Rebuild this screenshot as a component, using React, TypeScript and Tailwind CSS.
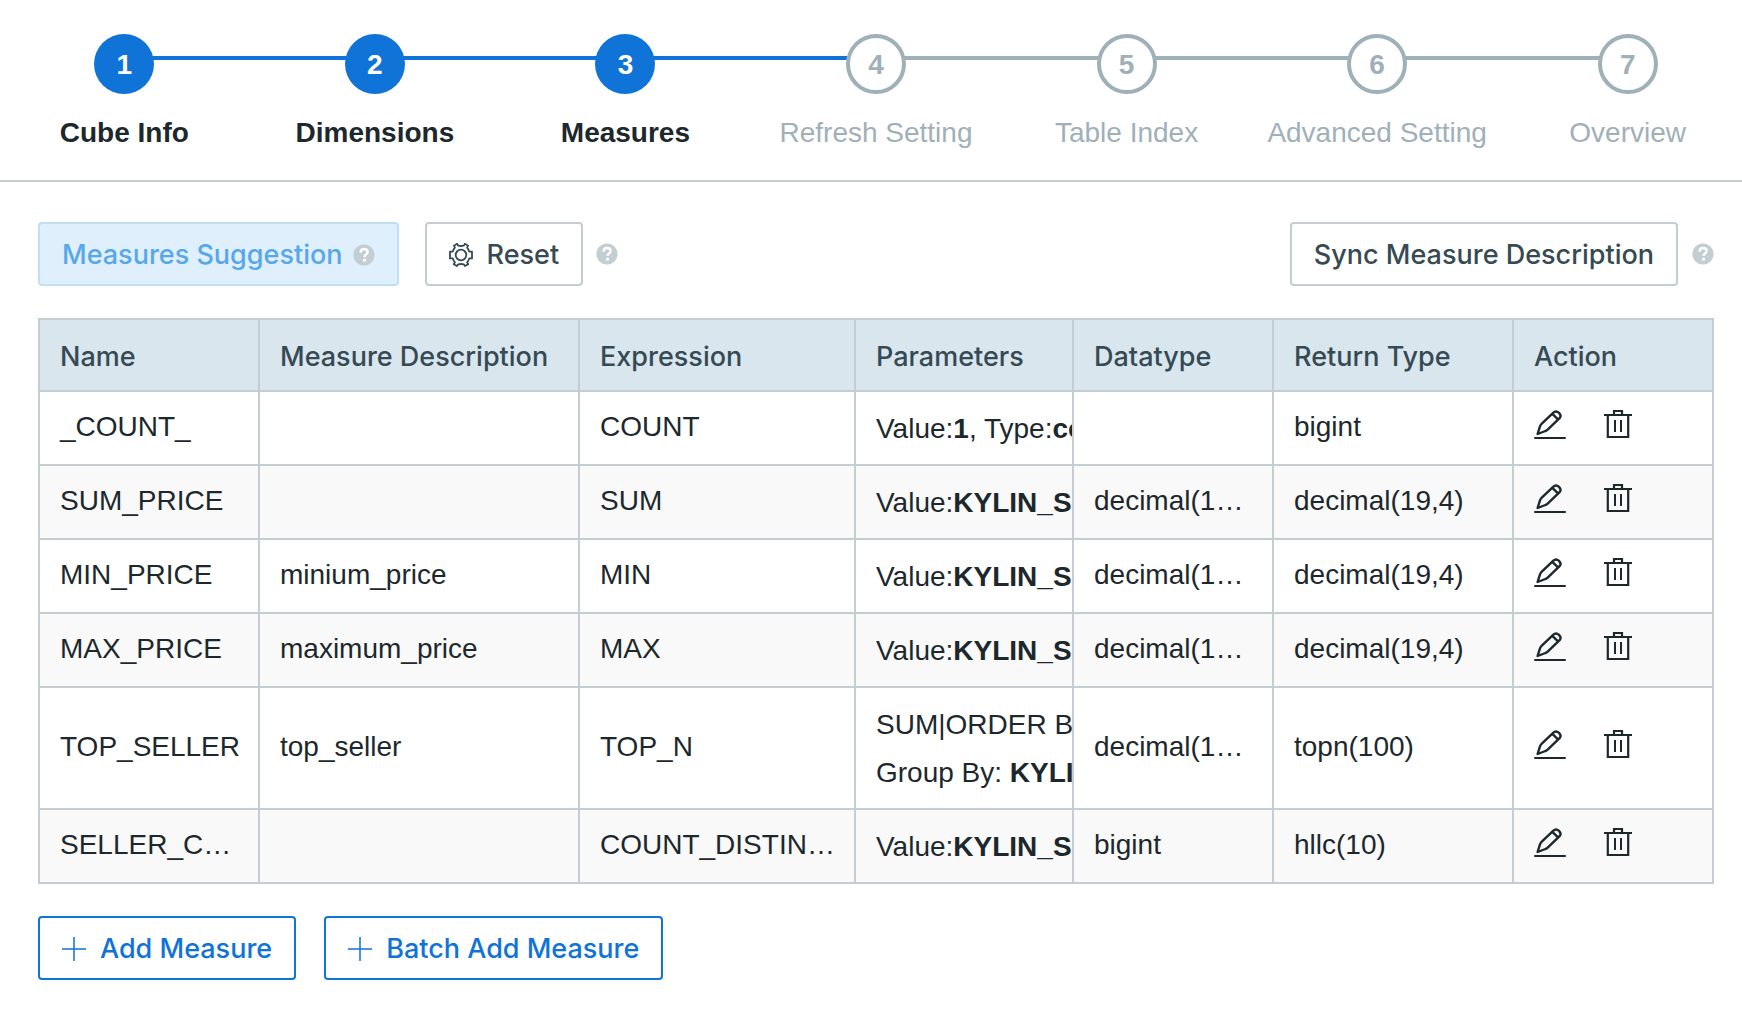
import { useState } from "react";
import type { ReactNode } from "react";

const steps = ["Cube Info", "Dimensions", "Measures", "Refresh Setting", "Table Index", "Advanced Setting", "Overview"];
const current = 3;

type Measure = {
  name: string;
  description: string;
  expression: string;
  parameters: ReactNode[];
  datatype: string;
  returnType: string;
};

const priceParam = (
  <>
    Value:<b>KYLIN_SALES.PRICE</b>
  </>
);

const measures: Measure[] = [
  {
    name: "_COUNT_",
    description: "",
    expression: "COUNT",
    parameters: [
      <>
        Value:<b>1</b>, Type:<b>constant</b>
      </>,
    ],
    datatype: "",
    returnType: "bigint",
  },
  { name: "SUM_PRICE", description: "", expression: "SUM", parameters: [priceParam], datatype: "decimal(19,4)", returnType: "decimal(19,4)" },
  { name: "MIN_PRICE", description: "minium_price", expression: "MIN", parameters: [priceParam], datatype: "decimal(19,4)", returnType: "decimal(19,4)" },
  { name: "MAX_PRICE", description: "maximum_price", expression: "MAX", parameters: [priceParam], datatype: "decimal(19,4)", returnType: "decimal(19,4)" },
  {
    name: "TOP_SELLER",
    description: "top_seller",
    expression: "TOP_N",
    parameters: [
      <>SUM|ORDER BY</>,
      <>
        Group By: <b>KYLIN_SALES</b>
      </>,
    ],
    datatype: "decimal(19,4)",
    returnType: "topn(100)",
  },
  {
    name: "SELLER_CNT_HLL",
    description: "",
    expression: "COUNT_DISTINCT",
    parameters: [
      <>
        Value:<b>KYLIN_SALES.SELLER_ID</b>
      </>,
    ],
    datatype: "bigint",
    returnType: "hllc(10)",
  },
];

function HelpIcon() {
  return (
    <svg viewBox="0 0 22 22" className="size-[22px] shrink-0" aria-hidden="true">
      <circle cx="11" cy="11" r="10.6" fill="#c3ced3" />
      <path d="M7.5 8.6C7.6 6.2 9.1 5 11.1 5c2.1 0 3.5 1.1 3.5 2.9 0 2.4-3.1 2.6-3.1 5.2" fill="none" stroke="#fff" strokeWidth="2.4" />
      <circle cx="11.5" cy="16.2" r="1.6" fill="#fff" />
    </svg>
  );
}

function GearIcon() {
  return (
    <svg viewBox="0 0 24 24" className="size-6" fill="none" stroke="currentColor" strokeWidth="1.8" strokeLinejoin="round" aria-hidden="true">
      <path d="M9.2 2.7 L8.2 .8 L4.9 2.7 L5.9 4.6 Q4.6 5.9 3.8 8.6 H1 V15.4 H3.8 Q4.4 17.8 5.9 19.3 L4.8 21.2 L8 23.1 L9.2 21.3 Q12 20.7 14.8 21.3 L16 23.1 L19.2 21.2 L18.1 19.3 Q19.6 17.8 20.2 15.4 H23 V8.6 H20.2 Q19.4 5.9 18.1 4.6 L19.1 2.7 L15.8 .8 L14.8 2.7 Q12 3.3 9.2 2.7Z" />
      <circle cx="12" cy="12" r="5.3" />
    </svg>
  );
}

function EditIcon() {
  return (
    <svg viewBox="0 0 32 30" className="h-[30px] w-8" fill="none" stroke="currentColor" strokeWidth="2.4" aria-hidden="true">
      <path d="M3.6 24 L6 16.4 Q6.4 15.2 7.3 14.2 L19.4 2.6 Q22 .2 25 2.8 Q27.8 5.6 25.6 8.2 L13.4 19.8 Q12.6 20.6 11.4 21 Z" strokeLinejoin="round" />
      <path d="M18.3 3.8 L24.3 9.6" />
      <path d="M1 28 H31" strokeLinecap="round" strokeWidth="2" />
    </svg>
  );
}

function TrashIcon() {
  return (
    <svg viewBox="0 0 28 28" className="size-7" fill="none" stroke="currentColor" strokeWidth="2" aria-hidden="true">
      <path d="M0 5 H28 M10 4 V1 H18 V4 M3.8 6 V27 H24.2 V6" strokeWidth="2.2" />
      <path d="M11 10 V22 M17 10 V22" />
    </svg>
  );
}

function PlusIcon() {
  return (
    <svg viewBox="0 0 24 24" className="size-6" stroke="currentColor" strokeWidth="1.5" aria-hidden="true">
      <path d="M0 12 H24 M12 0 V24" />
    </svg>
  );
}

const buttonBase = "flex h-16 items-center rounded border-2 px-[22px] pt-0.5 font-['Inter',sans-serif] text-[27px] font-medium whitespace-nowrap";

function Steps() {
  return (
    <nav aria-label="Cube wizard" className="overflow-hidden border-b-2 border-[#c3ced3] pt-[34px] pb-7">
      <ol className="-mr-[11px] -ml-px grid grid-cols-7">
        {steps.map((label, i) => {
          const done = i < current;
          return (
            <li key={label} className="relative flex flex-col items-center gap-5">
              {i > 0 && (
                <span
                  className={
                    i <= current
                      ? "absolute top-[22px] right-1/2 h-1 w-full bg-[#0f73d8]"
                      : "absolute top-[22px] right-1/2 h-1 w-full bg-[#9fb0b8]"
                  }
                />
              )}
              <span
                className={
                  done
                    ? "relative z-10 flex size-[60px] items-center justify-center rounded-full bg-[#0f73d8] pt-0.5 font-bold text-white"
                    : "relative z-10 flex size-[60px] items-center justify-center rounded-full border-4 border-[#9fb0b8] bg-white pt-0.5 font-bold text-[#9fb0b8]"
                }
              >
                {i + 1}
              </span>
              <span className={done ? "leading-[38px] font-bold whitespace-nowrap" : "leading-[38px] whitespace-nowrap text-[#9fb0b8]"}>
                {label}
              </span>
            </li>
          );
        })}
      </ol>
    </nav>
  );
}

function TextCell({ children }: { children?: ReactNode }) {
  return <td className="truncate border-r-2 border-b-2 border-[#c3ced3] pt-3 pr-4 pb-3.5 pl-5 leading-[46px]">{children}</td>;
}

function HeadCell({ children }: { children: ReactNode }) {
  return (
    <th
      scope="col"
      className="h-[72px] border-r-2 border-b-2 border-[#c3ced3] pt-1 pl-5 text-left font-['Inter',sans-serif] text-[27px] font-medium whitespace-nowrap"
    >
      {children}
    </th>
  );
}

function MeasureTable({ rows, onRemove }: { rows: Measure[]; onRemove: (name: string) => void }) {
  return (
    <table className="mt-8 w-full table-fixed border-separate border-spacing-0 border-t-2 border-l-2 border-[#c3ced3]">
      <colgroup>
        <col className="w-[220px]" />
        <col className="w-[320px]" />
        <col className="w-[276px]" />
        <col className="w-[218px]" />
        <col className="w-[200px]" />
        <col className="w-[240px]" />
        <col className="w-[200px]" />
      </colgroup>
      <thead className="bg-[#d9e6ee] text-[#364a54]">
        <tr>
          <HeadCell>Name</HeadCell>
          <HeadCell>Measure Description</HeadCell>
          <HeadCell>Expression</HeadCell>
          <HeadCell>Parameters</HeadCell>
          <HeadCell>Datatype</HeadCell>
          <HeadCell>Return Type</HeadCell>
          <HeadCell>Action</HeadCell>
        </tr>
      </thead>
      <tbody>
        {rows.map((m) => (
          <tr key={m.name} className="even:bg-[#f9f9f9]">
            <TextCell>{m.name}</TextCell>
            <TextCell>{m.description}</TextCell>
            <TextCell>{m.expression}</TextCell>
            <td className="border-r-2 border-b-2 border-[#c3ced3] pt-[13px] pb-[11px] pl-5 leading-[48px] whitespace-nowrap">
              {m.parameters.map((line, i) => (
                <div key={i} className="overflow-hidden">
                  {line}
                </div>
              ))}
            </td>
            <TextCell>{m.datatype}</TextCell>
            <TextCell>{m.returnType}</TextCell>
            <td className="border-r-2 border-b-2 border-[#c3ced3] pb-1.5 pl-5">
              <div className="flex items-start gap-[38px]">
                <button type="button" aria-label={`Edit ${m.name}`}>
                  <EditIcon />
                </button>
                <button type="button" aria-label={`Delete ${m.name}`} onClick={() => onRemove(m.name)}>
                  <TrashIcon />
                </button>
              </div>
            </td>
          </tr>
        ))}
      </tbody>
    </table>
  );
}

export default function App() {
  const [rows, setRows] = useState(measures);

  return (
    <div className="min-h-screen bg-white font-['Liberation_Sans',Arial,sans-serif] text-[28px] text-[#1d282d]">
      <Steps />
      <main className="pt-10 pr-7 pb-10 pl-[38px]">
        <div className="flex items-center justify-between">
          <div className="flex items-center">
            <button type="button" disabled className={`${buttonBase} gap-2.5 border-[#c0dff6] bg-[#e0effc] text-[#57a8e8]`}>
              Measures Suggestion
              <HelpIcon />
            </button>
            <button
              type="button"
              onClick={() => setRows(measures)}
              className={`${buttonBase} mr-[13px] ml-[26px] gap-3.5 border-[#c3ced3] text-[#364a54]`}
            >
              <GearIcon />
              Reset
            </button>
            <HelpIcon />
          </div>
          <div className="flex items-center gap-3.5">
            <button type="button" className={`${buttonBase} border-[#c3ced3] text-[#364a54]`}>
              Sync Measure Description
            </button>
            <HelpIcon />
          </div>
        </div>

        <MeasureTable rows={rows} onRemove={(name) => setRows((r) => r.filter((m) => m.name !== name))} />

        <div className="mt-8 flex gap-7">
          <button type="button" className={`${buttonBase} gap-3.5 border-[#0f73d8] text-[#0f73d8]`}>
            <PlusIcon />
            Add Measure
          </button>
          <button type="button" className={`${buttonBase} gap-3.5 border-[#0f73d8] text-[#0f73d8]`}>
            <PlusIcon />
            Batch Add Measure
          </button>
        </div>
      </main>
    </div>
  );
}
